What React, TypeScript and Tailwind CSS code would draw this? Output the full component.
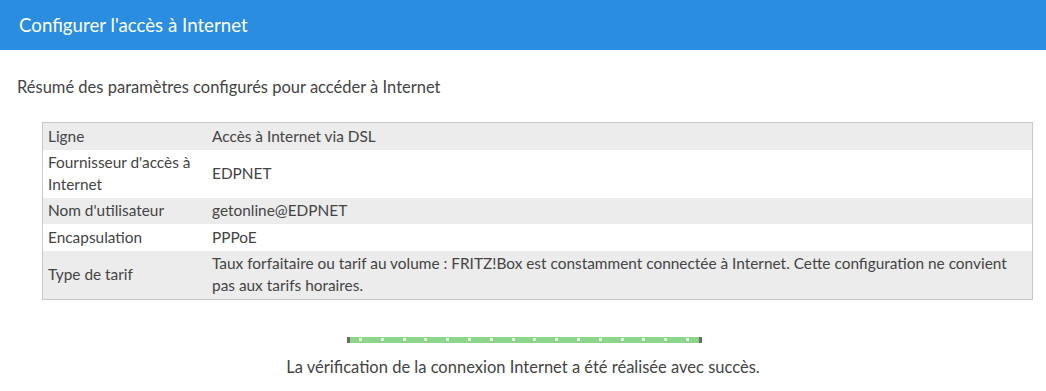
import React from "react";

const rows: { k: string; v: string; shade: boolean }[] = [
  { k: "Ligne", v: "Accès à Internet via DSL", shade: true },
  { k: "Fournisseur d'accès à Internet", v: "EDPNET", shade: false },
  { k: "Nom d'utilisateur", v: "getonline@EDPNET", shade: true },
  { k: "Encapsulation", v: "PPPoE", shade: false },
  {
    k: "Type de tarif",
    v: "Taux forfaitaire ou tarif au volume : FRITZ!Box est constamment connectée à Internet. Cette configuration ne convient pas aux tarifs horaires.",
    shade: true,
  },
];

export default function App() {
  const dots = Array.from({ length: 16 });
  return (
    <div className="w-[1046px] h-[391px] bg-white text-[#444] font-['Lato',sans-serif] overflow-hidden">
      <div className="h-[50px] bg-[#2a8ddf] flex items-center pl-[19px]">
        <span className="text-white text-[18.7px]">Configurer l'accès à Internet</span>
      </div>
      <p className="mt-[27px] ml-[17px] text-[16.5px] leading-[20px]">
        Résumé des paramètres configurés pour accéder à Internet
      </p>
      <div className="mt-[25px] ml-[42px] w-[991px] border border-[#c8c8c8]">
        {rows.map((r, i) => (
          <div
            key={i}
            className={`flex text-[15.4px] leading-[21.5px] ${r.shade ? "bg-[#ececec]" : "bg-white"}`}
          >
            <div className="w-[169px] shrink-0 pl-[5px] pr-[6px] py-[2.5px] flex items-center">{r.k}</div>
            <div className="flex-1 pr-[10px] py-[2.5px] flex items-center">{r.v}</div>
          </div>
        ))}
      </div>
      <div className="mt-[37px] flex justify-center">
        <div className="ml-[2px] w-[355px] h-[6px] bg-[#8bd68b] border-x-[3px] border-[#6a6a6a] flex items-center justify-around">
          {dots.map((_, i) => (
            <span key={i} className="w-[3px] h-[3px] bg-[#e6f7e6]" />
          ))}
        </div>
      </div>
      <p className="mt-[14px] text-center text-[16.5px] leading-[20px]">
        La vérification de la connexion Internet a été réalisée avec succès.
      </p>
    </div>
  );
}
